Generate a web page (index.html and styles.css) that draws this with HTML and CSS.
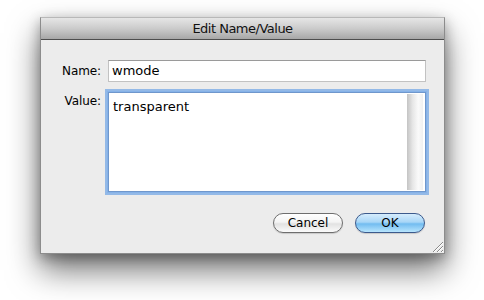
FILE: index.html
```html
<!DOCTYPE html>
<html>
<head>
<meta charset="utf-8">
<link rel="stylesheet" href="styles.css">
</head>
<body>
<div class="window">
  <div class="titlebar">Edit Name/Value</div>
  <div class="content">
    <div class="form">
      <label class="label">Name:</label>
      <div class="input">wmode</div>
      <label class="label label-top">Value:</label>
      <div class="textarea">
        <div class="textarea-text">transparent</div>
        <div class="scrolltrack"></div>
      </div>
    </div>
    <div class="buttons">
      <button class="btn">Cancel</button>
      <button class="btn btn-default">OK</button>
    </div>
  </div>
  <svg class="grip" width="14" height="14" viewBox="0 0 14 14">
    <path d="M13 3 L3 13 M13 7 L7 13 M13 11 L11 13" stroke="#8a8a8a" stroke-width="1"/>
    <path d="M13 4 L4 13 M13 8 L8 13 M13 12 L12 13" stroke="#ffffff" stroke-width="1"/>
  </svg>
</div>
</body>
</html>
```

FILE: styles.css
```css
html, body {
  margin: 0;
  padding: 0;
  background: #ffffff;
}
body {
  width: 484px;
  height: 300px;
  overflow: hidden;
  padding-top: 17px;
  box-sizing: border-box;
  font-family: "DejaVu Sans", "Liberation Sans", sans-serif;
}
.window {
  position: relative;
  margin-left: 40px;
  width: 405px;
  height: 237px;
  box-sizing: border-box;
  background: #ececec;
  border: 1px solid #8c8c8c;
  border-top-color: #b8b8b8;
  box-shadow: 0 16px 30px rgba(0,0,0,0.55), 0 4px 12px rgba(0,0,0,0.3);
  display: flex;
  flex-direction: column;
}
.titlebar {
  height: 21px;
  border-bottom: 1px solid #4d4d4d;
  background: linear-gradient(#e6e6e6, #cbcbcb 50%, #a7a7a7);
  text-align: center;
  font-size: 13px;
  line-height: 22px;
  color: #111;
  letter-spacing: -0.5px;
}
.content {
  flex: 1;
  padding: 20px 18px 0 0;
  display: flex;
  flex-direction: column;
}
.form {
  display: grid;
  grid-template-columns: 60px 1fr;
  column-gap: 7px;
  row-gap: 10px;
}
.label {
  font-size: 12px;
  color: #000;
  text-align: right;
  line-height: 22px;
  letter-spacing: -0.1px;
}
.label-top {
  margin-top: -2px;
}
.input {
  height: 22px;
  box-sizing: border-box;
  background: #fff;
  border: 1px solid #c2c2c2;
  border-top-color: #9a9a9a;
  font-size: 13px;
  line-height: 20px;
  padding-left: 3px;
  color: #000;
}
.textarea {
  height: 100px;
  box-sizing: border-box;
  background: #fff;
  border: 1px solid #6f97cc;
  box-shadow: 0 0 0 1px #86b2e8, 0 0 0 3px rgba(118,168,230,0.75);
  display: flex;
  padding: 1px 2px 1px 0;
}
.textarea-text {
  flex: 1;
  font-size: 13px;
  line-height: 18px;
  padding: 4px 0 0 4px;
  color: #000;
}
.scrolltrack {
  width: 16px;
  background: linear-gradient(to right, #c4c4c4, #e6e6e6 35%, #fafafa 70%, #f0f0f0);
}
.buttons {
  display: flex;
  justify-content: flex-end;
  gap: 12px;
  margin-top: 21px;
  padding-right: 1px;
}
.btn {
  width: 70px;
  height: 20px;
  border-radius: 10px;
  border: 1px solid #6e6e6e;
  background: linear-gradient(#ffffff, #f4f4f4 45%, #e2e2e2 55%, #fbfbfb);
  font-family: "DejaVu Sans", "Liberation Sans", sans-serif;
  font-size: 12px;
  color: #000;
  padding: 0;
  line-height: 18px;
  box-shadow: 0 1px 1px rgba(0,0,0,0.15);
}
.btn-default {
  border-color: #3c5a8c;
  background: linear-gradient(#d5ecfc, #a8d6f7 45%, #72bcf0 55%, #b8e5fd);
}
.grip {
  position: absolute;
  right: 0;
  bottom: 0;
}
```
